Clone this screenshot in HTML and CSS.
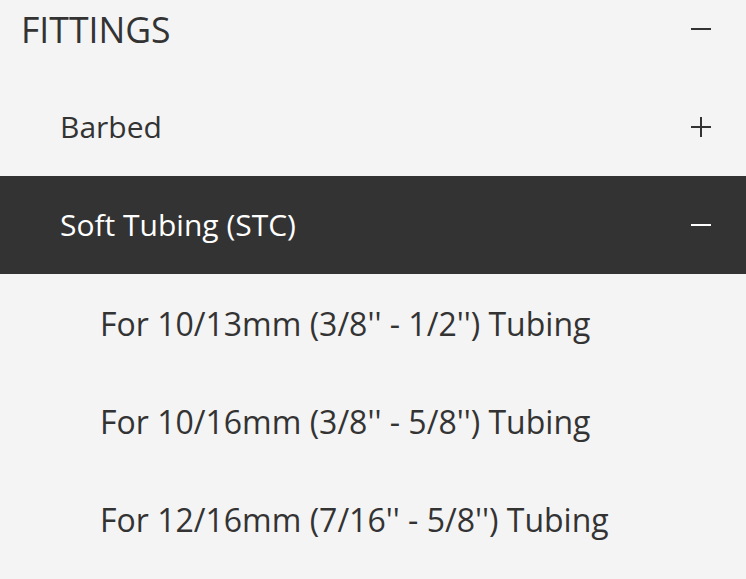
FILE: index.html
```html
<!DOCTYPE html>
<html>
<head>
<meta charset="utf-8">
<link rel="stylesheet" href="styles.css">
</head>
<body>
<nav class="menu">
  <div class="row head">
    <span class="label">FITTINGS</span>
    <svg class="icon" viewBox="0 0 20 20"><path d="M0 10H20" /></svg>
  </div>
  <ul class="list">
    <li class="row lvl1">
      <span class="label">Barbed</span>
      <svg class="icon" viewBox="0 0 20 20"><path d="M0 10H20M10 0V20" /></svg>
    </li>
    <li class="row lvl1 active">
      <span class="label">Soft Tubing (STC)</span>
      <svg class="icon" viewBox="0 0 20 20"><path d="M0 10H20" /></svg>
    </li>
    <li class="row lvl2"><span class="label">For 10/13mm (3/8'' - 1/2'') Tubing</span></li>
    <li class="row lvl2"><span class="label">For 10/16mm (3/8'' - 5/8'') Tubing</span></li>
    <li class="row lvl2"><span class="label">For 12/16mm (7/16'' - 5/8'') Tubing</span></li>
  </ul>
</nav>
</body>
</html>
```

FILE: styles.css
```css
html, body {
  margin: 0;
  padding: 0;
  background: #f4f4f4;
}
body {
  font-family: "Open Sans", "Liberation Sans", sans-serif;
  color: #333333;
}
.menu {
  width: 746px;
}
.list {
  list-style: none;
  margin: 0;
  padding: 20px 0 0 0;
}
.row {
  display: flex;
  align-items: center;
  justify-content: space-between;
  height: 98px;
  padding-right: 35px;
  box-sizing: border-box;
}
.head {
  height: 58px;
  padding-left: 21px;
  font-size: 35.6px;
}
.lvl1 {
  padding-left: 60px;
  font-size: 30px;
  padding-bottom: 1px;
}
.lvl2 {
  padding-left: 100px;
  font-size: 32px;
}
.active {
  background: #333333;
  color: #ffffff;
}
.icon {
  width: 20px;
  height: 20px;
  fill: none;
  stroke: currentColor;
  stroke-width: 2;
}
```
